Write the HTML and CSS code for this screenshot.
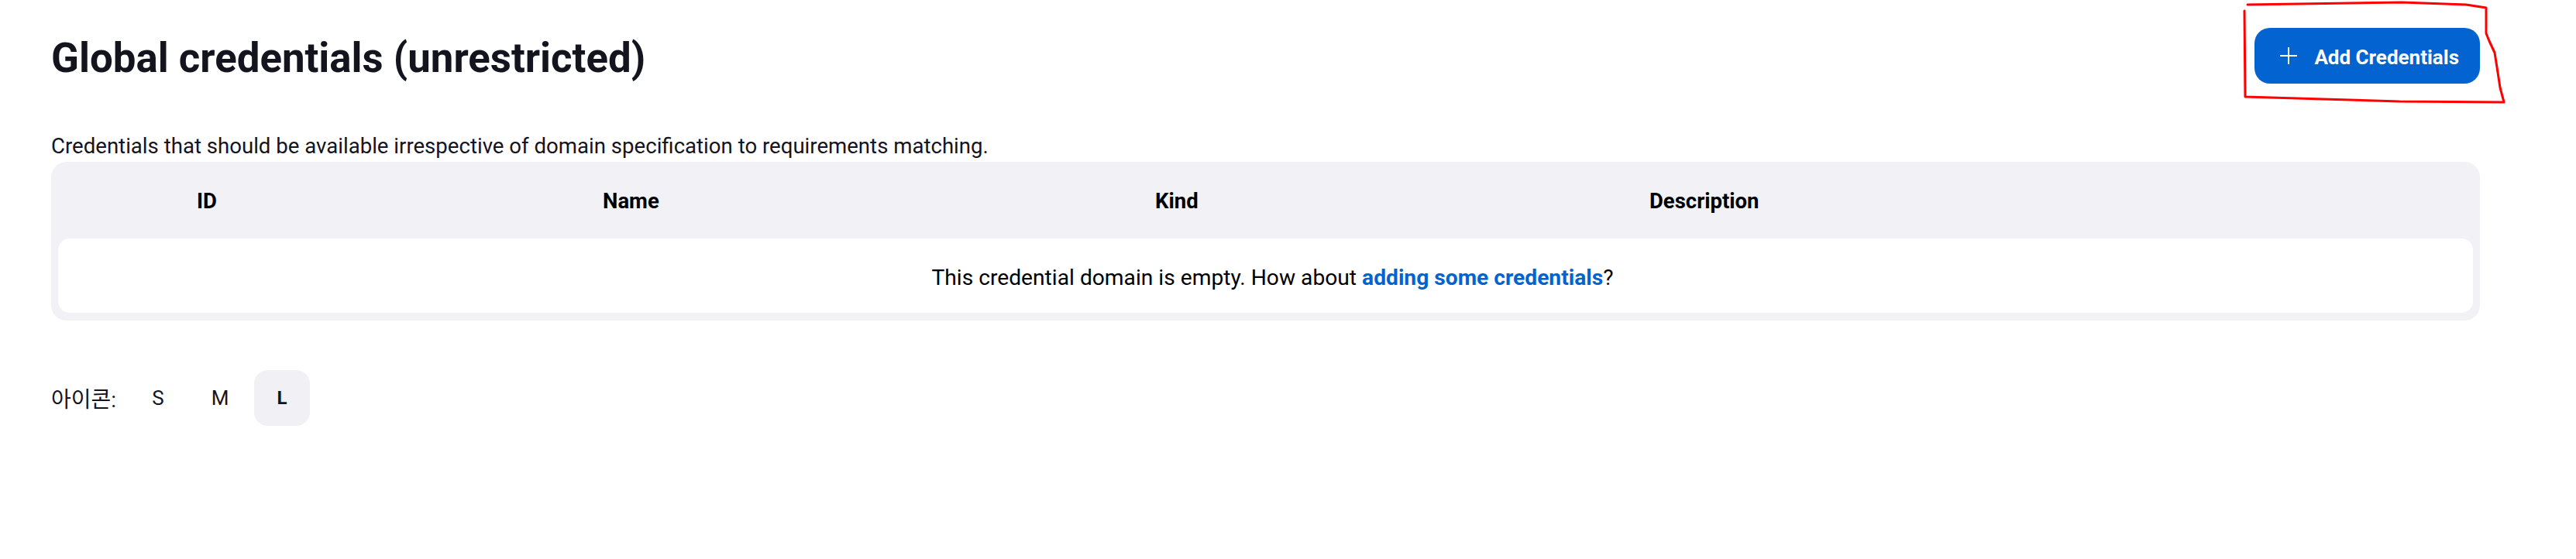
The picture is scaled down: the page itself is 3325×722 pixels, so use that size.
FILE: index.html
```html
<!DOCTYPE html>
<html lang="ko">
<head>
<meta charset="utf-8">
<title>Global credentials (unrestricted)</title>
<link rel="stylesheet" href="styles.css">
</head>
<body>
<div class="page">
  <header class="page-head">
    <h1 class="title">Global credentials (unrestricted)</h1>
    <a class="btn-add" href="#">
      <svg class="btn-icon" viewBox="0 0 22 22" width="22" height="22" aria-hidden="true"><path d="M11 0v22M0 11h22" stroke="#fff" stroke-width="2" fill="none"/></svg>
      <span class="btn-text">Add Credentials</span>
    </a>
  </header>
  <p class="desc">Credentials that should be available irrespective of domain specification to requirements matching.</p>
  <div class="cred-table">
    <div class="thead">
      <span></span><span>ID</span><span>Name</span><span>Kind</span><span>Description</span>
    </div>
    <div class="tbody">
      <p class="empty">This credential domain is empty. How about <a href="#" class="link">adding some credentials</a>?</p>
    </div>
  </div>
  <div class="icon-size">
    <span class="label">아이콘:</span>
    <button class="size">S</button>
    <button class="size">M</button>
    <button class="size active">L</button>
  </div>
</div>
<svg class="annotation" viewBox="0 0 3325 722" width="3325" height="722" aria-hidden="true">
  <path d="M2901 6 L3100 3 L3183 6 L3209 10 L3209 43 L3213 53 L3220 68 L3223 87 L3227 113 L3232 132 L3097 131 L2998 128 L2898 125 L2897 14" fill="none" stroke="#ff0000" stroke-width="3" stroke-linejoin="round" stroke-linecap="round"/>
</svg>
</body>
</html>
```
FILE: styles.css
```css
* { box-sizing: border-box; }
html, body { margin: 0; padding: 0; background: #fff; }
body {
  font-family: Roboto, "Noto Sans CJK KR", sans-serif;
  color: #14141f;
  width: 3325px;
  height: 722px;
  position: relative;
  overflow: hidden;
}
.page { padding: 36px 124px 0 66px; }
.page-head { display: flex; align-items: flex-start; justify-content: space-between; height: 72px; }
.title { margin: 0; padding-top: 3px; font-size: 52.8px; line-height: 72px; font-weight: 700; color: #14141f; }
.btn-add {
  display: flex; align-items: center; gap: 22px;
  height: 72px; padding: 0 27px 0 33px;
  background: #0263d1; color: #fff; border-radius: 20px;
  text-decoration: none; font-weight: 700; font-size: 26px; line-height: 32px;
}
.btn-icon { display: block; }
.btn-text { padding-top: 3px; }
.desc { margin: 65px 0 4px; font-size: 27.6px; line-height: 32px; color: #14141f; }
.cred-table { background: #f2f2f6; border-radius: 20px; padding: 0 9px 10px; }
.thead {
  display: grid; grid-template-columns: 179px 524px 713px 638px 1fr;
  height: 99px; padding-top: 3px; align-items: center;
  font-weight: 700; font-size: 27.5px; line-height: 36px; color: #000;
}
.tbody {
  background: #fff; border-radius: 15px; height: 96px;
  display: flex; align-items: center; justify-content: center;
  padding: 5px 0 0 18px;
}
.empty { margin: 0; font-size: 28.2px; line-height: 36px; color: #000; }
.link { color: #0263d1; font-weight: 700; text-decoration: none; }
.icon-size { display: flex; align-items: center; gap: 8px; margin-top: 64px; }
.label { margin-right: 10px; font-size: 28px; color: #14141f; }
.size {
  width: 72px; height: 72px; border: 0; border-radius: 18px; background: transparent;
  font-family: inherit; font-size: 26px; color: #14141f; padding: 0;
}
.size.active { background: #f0f0f5; font-weight: 700; font-size: 24px; }
.annotation { position: absolute; left: 0; top: 0; pointer-events: none; }
```
